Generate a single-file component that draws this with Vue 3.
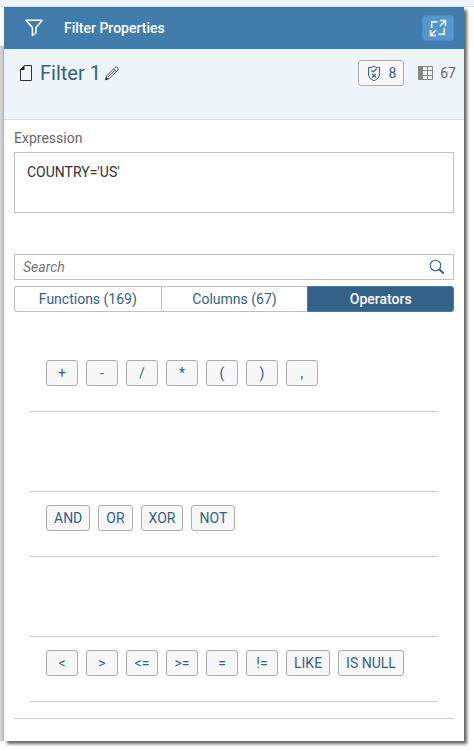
<script setup>
import { ref } from 'vue'

const expression = ref("COUNTRY='US'")
const search = ref('')
const active = ref('Operators')
const tabs = [
  { id: 'Functions', label: 'Functions (169)' },
  { id: 'Columns', label: 'Columns (67)' },
  { id: 'Operators', label: 'Operators' },
]
const groups = [
  ['+', '-', '/', '*', '(', ')', ','],
  ['AND', 'OR', 'XOR', 'NOT'],
  ['<', '>', '<=', '>=', '=', '!=', 'LIKE', 'IS NULL'],
]
function insert(op) {
  expression.value += ' ' + op
}
</script>

<template>
  <div class="page">
    <div class="strip"></div>
    <div class="stage">
      <div class="gutter"></div>
      <main class="panel">
        <header class="bar">
          <svg class="funnel" width="20" height="20" viewBox="0 0 20 20" aria-hidden="true">
            <path d="M2 2.2H18.2L12 9.5V14.9L8.4 17.5V9.5Z" fill="none" stroke="#fff" stroke-width="1.5" stroke-linejoin="round" />
          </svg>
          <h1>Filter Properties</h1>
          <button class="expand" type="button" aria-label="Expand">
            <svg width="18" height="18" viewBox="0 0 18 18" fill="none" stroke="#fff" stroke-width="1.5" aria-hidden="true">
              <path d="M8.5 2.7H2.7V9M15.3 9V15.3H9.5M11 7L16 2M11 1.5H16.5V7M7 11L2 16M1.5 11V16.5H7" />
            </svg>
          </button>
        </header>

        <section class="title">
          <svg class="doc" width="14" height="18" viewBox="0 0 14 18" aria-hidden="true">
            <path d="M5.5 1.5H12.5V16.5H1.5V5.5Z" fill="none" stroke="#333" />
            <path d="M1 6L5.5 1V6Z" fill="#222" />
          </svg>
          <h2>Filter 1</h2>
          <button class="edit" type="button" aria-label="Rename">
            <svg width="16" height="16" viewBox="0 0 16 16" fill="none" stroke="#444" stroke-width=".9" aria-hidden="true">
              <path d="M2.6 11L11 2.4Q12 1.3 13 2.2L14 3.1Q14.8 4 13.9 5L5.3 13.6L1.5 14.7ZM9.5 4L12.3 6.7M4 12.2L10.8 5.4" />
              <path d="M1 15.2L2.2 11.8L4.5 14Z" fill="#333" stroke="none" />
            </svg>
          </button>
          <button class="checks" type="button">
            <svg width="14" height="17" viewBox="0 0 14 17" fill="none" stroke="#346187" aria-hidden="true">
              <path d="M7 1L9 2.3L12.5 2.5V10Q12.5 13.5 7 15.8Q1.5 13.5 1.5 10V2.5L5 2.3Z" />
              <path d="M4.5 5.5L6.2 7L9.7 3.8" stroke-width="1.3" />
              <path d="M5 9L9 12.6M9 9L5 12.6" stroke-width="1.3" />
            </svg>
            <span>8</span>
          </button>
          <div class="count">
            <svg width="15" height="15" viewBox="0 0 15 15" aria-hidden="true">
              <path d="M0 0H5V14H0Z" fill="#888" />
              <path d="M5 .5H14.5V13.5H5M9.5 0V14M5 4.5H15M5 9.5H15" fill="none" stroke="#888" />
            </svg>
            <span>67</span>
          </div>
        </section>

        <section class="content">
          <label for="expr">Expression</label>
          <textarea id="expr" v-model="expression" spellcheck="false"></textarea>

          <div class="search">
            <input v-model="search" type="text" placeholder="Search" aria-label="Search" />
            <button type="button" aria-label="Run search">
              <svg width="16" height="16" viewBox="0 0 16 16" fill="none" stroke="#346187" aria-hidden="true">
                <circle cx="6.5" cy="6.5" r="5.3" stroke-width="1.1" />
                <path d="M10.3 10.3L14.7 14.4" stroke-width="2" />
              </svg>
            </button>
          </div>

          <div class="tabs" role="tablist">
            <button
              v-for="t in tabs"
              :key="t.id"
              type="button"
              role="tab"
              :aria-selected="active === t.id"
              :class="{ on: active === t.id }"
              @click="active = t.id"
            >{{ t.label }}</button>
          </div>

          <div class="groups">
            <div v-for="(g, i) in groups" :key="i" class="group">
              <button v-for="op in g" :key="op" type="button" @click="insert(op)">{{ op }}</button>
            </div>
          </div>
        </section>
      </main>
    </div>
  </div>
</template>

<style>
body {
  background: #fff;
}
</style>

<style scoped>
* {
  box-sizing: border-box;
}
.page {
  font-family: Roboto, "Liberation Sans", sans-serif;
  font-size: 14px;
  line-height: 18px;
  color: #666;
  padding-bottom: 10px;
}
button,
input,
textarea {
  font: inherit;
  margin: 0;
}
button {
  cursor: pointer;
  padding: 0;
}
svg {
  display: block;
  flex: none;
}
.strip {
  height: 7px;
  background: #eff4f8;
  border-bottom: 1px solid #d1e0ee;
}
.stage {
  display: flex;
  padding-right: 10px;
}
.gutter {
  width: 4px;
  background: linear-gradient(#fff 39px, #bbb 39px, #bbb 40px, transparent 40px),
    linear-gradient(90deg, #d6d6d6, #cfcfcf 50%, #aaa);
}
.panel {
  flex: 1;
  min-width: 0;
  background: #fff;
  box-shadow: 3px 3px 3px #666;
}
.bar {
  display: flex;
  align-items: center;
  height: 42px;
  padding: 0 10px 0 20px;
  background: #427cac;
  color: #fff;
}
.bar h1 {
  flex: 1;
  margin: 0 0 0 20px;
  font-size: 14px;
  font-weight: 500;
}
.expand {
  display: grid;
  place-items: center;
  width: 32px;
  height: 26px;
  border: 1px solid #4a8cc5;
  border-radius: 3px;
  background: #5496cd;
}
.title {
  display: flex;
  align-items: center;
  height: 71px;
  padding: 0 8px 22px 15px;
  background: #eff4f8;
  border-bottom: 1px solid #d1e0ee;
}
.title h2 {
  margin: 0 3px 0 7px;
  font-size: 20px;
  line-height: 24px;
  font-weight: 400;
  color: #346187;
}
.edit {
  border: 0;
  background: none;
}
.checks {
  display: flex;
  align-items: center;
  gap: 7px;
  height: 26px;
  margin-left: auto;
  padding: 0 7px 0 8px;
  border: 1px solid #ababab;
  border-radius: 3px;
  background: #f7f7f7;
  color: #346187;
}
.count {
  display: flex;
  align-items: center;
  gap: 7px;
  margin-left: 14px;
}
.content {
  padding: 9px 10px 22px;
}
label {
  display: block;
  margin-bottom: 5px;
}
textarea {
  display: block;
  width: 100%;
  height: 61px;
  padding: 10px 12px;
  border: 1px solid #bfbfbf;
  border-radius: 0;
  color: #333;
  background: #fff;
  resize: none;
  outline: none;
}
.search {
  display: flex;
  align-items: center;
  height: 26px;
  margin-top: 41px;
  border: 1px solid #bfbfbf;
  padding: 0 8px;
}
.search input {
  flex: 1;
  min-width: 0;
  border: 0;
  padding: 0;
  outline: none;
  background: none;
}
.search input::placeholder {
  color: #757575;
  font-style: italic;
  opacity: 1;
}
.search button {
  border: 0;
  background: none;
}
.tabs {
  display: grid;
  grid-template-columns: repeat(3, 1fr);
  margin-top: 6px;
}
.tabs button {
  height: 26px;
  border: 1px solid #bfbfbf;
  border-right-width: 0;
  background: #fff;
  color: #346187;
}
.tabs button:first-child {
  border-radius: 3px 0 0 3px;
}
.tabs button:last-child {
  border-right-width: 1px;
  border-radius: 0 3px 3px 0;
}
.tabs button.on {
  background: #346187;
  border-color: #427cac;
  color: #fff;
  font-weight: 500;
}
.groups {
  display: flex;
  flex-direction: column;
  gap: 79px;
  margin-top: 34px;
  padding: 0 16px 16px;
  border-bottom: 1px solid #ccc;
}
.group {
  display: flex;
  gap: 8px;
  padding: 13px 0 25px 16px;
  border-top: 1px solid #ccc;
  border-bottom: 1px solid #ccc;
}
.group:first-child {
  border-top-color: transparent;
}
.group button {
  min-width: 32px;
  height: 26px;
  padding: 0 7px;
  border: 1px solid #ababab;
  border-radius: 3px;
  background: #f7f7f7;
  color: #346187;
  white-space: nowrap;
}
</style>
